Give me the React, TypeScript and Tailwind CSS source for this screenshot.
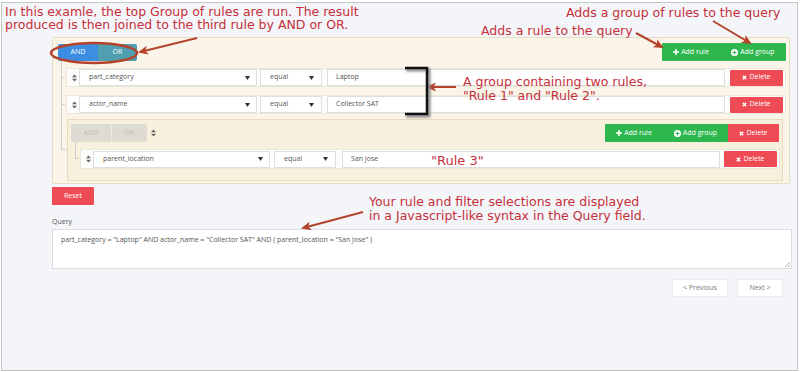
import React from "react";

function SortIcon() {
  return (
    <svg width="5" height="8" viewBox="0 0 5 8">
      <path d="M2.5 0.5L5 3.3H0z M2.5 7.5L0 4.7h5z" fill="#666" />
    </svg>
  );
}

function Caret() {
  return (
    <svg width="5" height="4" viewBox="0 0 5 4">
      <path d="M0 0h5L2.5 4z" fill="#333" />
    </svg>
  );
}

function PlusIcon() {
  return (
    <svg width="6" height="6" viewBox="0 0 6 6" className="mr-[2px]">
      <path d="M2.2 0h1.6v2.2H6v1.6H3.8V6H2.2V3.8H0V2.2h2.2z" fill="#fff" />
    </svg>
  );
}

function PlusCircleIcon() {
  return (
    <svg width="7" height="7" viewBox="0 0 7 7" className="mr-[2px]">
      <circle cx="3.5" cy="3.5" r="3.5" fill="#fff" />
      <path d="M3 1.5h1v1.5h1.5v1H4v1.5H3V4H1.5V3H3z" fill="#2eb74e" />
    </svg>
  );
}

function XIcon() {
  return (
    <svg width="5" height="5" viewBox="0 0 5 5" className="mr-[2px]">
      <path d="M0.8 0.8L4.2 4.2M4.2 0.8L0.8 4.2" stroke="#fff" strokeWidth="1.4" />
    </svg>
  );
}

function DeleteButton({ className = "" }: { className?: string }) {
  return (
    <div
      className={`flex items-center justify-center rounded-[1px] bg-[#ee4b55] text-[7px] text-white ${className}`}
    >
      <XIcon />
      Delete
    </div>
  );
}

interface RuleProps {
  field: string;
  value: string;
  fieldW: string;
  opGap: string;
  valGap: string;
  delGap: string;
  height: string;
}

function Rule({ field, value, fieldW, opGap, valGap, delGap, height }: RuleProps) {
  return (
    <div
      className={`flex items-center border border-[#ebe7dc] bg-[#fdfdfb] pl-[3px] pr-[2px] ${height}`}
    >
      <div className="flex w-[9px] justify-center">
        <SortIcon />
      </div>
      <div
        className={`flex h-[17px] items-center justify-between border border-[#dedede] bg-white pl-[9px] pr-[6px] text-[7px] text-[#555] ${fieldW}`}
      >
        <span>{field}</span>
        <Caret />
      </div>
      <div
        className={`flex h-[17px] w-[62px] items-center justify-between border border-[#dedede] bg-white pl-[9px] pr-[7px] text-[7px] text-[#555] ${opGap}`}
      >
        <span>equal</span>
        <Caret />
      </div>
      <div
        className={`flex h-[17px] flex-1 items-center border border-[#dedede] bg-white pl-[8px] text-[7px] text-[#555] ${valGap}`}
      >
        {value}
      </div>
      <DeleteButton className={`h-[16px] w-[53px] ${delGap}`} />
    </div>
  );
}

function GroupButtons({ withDelete }: { withDelete?: boolean }) {
  return (
    <div className="flex h-[18px] text-[7px] text-white">
      <div className="flex w-[58px] items-center justify-center rounded-l-[1px] bg-[#2eb74e]">
        <PlusIcon />
        Add rule
      </div>
      <div
        className={`flex items-center justify-center bg-[#2eb74e] ${
          withDelete ? "w-[65px]" : "w-[66px] rounded-r-[1px]"
        }`}
      >
        <PlusCircleIcon />
        Add group
      </div>
      {withDelete && (
        <div className="flex w-[51px] items-center justify-center rounded-r-[1px] bg-[#ee4b55]">
          <XIcon />
          Delete
        </div>
      )}
    </div>
  );
}

function Annotations() {
  const red = "#b5432c";
  return (
    <>
      <div className="pointer-events-none absolute left-[5px] top-[5px] text-[12.5px] leading-[13px] text-[#c5303a] font-['DejaVu_Sans',sans-serif]">
        In this examle, the top Group of rules are run. The result
        <br />
        produced is then joined to the third rule by AND or OR.
      </div>
      <div className="pointer-events-none absolute left-[566px] top-[6px] text-[12.5px] leading-[13px] text-[#c5303a] font-['DejaVu_Sans',sans-serif]">
        Adds a group of rules to the query
      </div>
      <div className="pointer-events-none absolute left-[481px] top-[24px] text-[12.5px] leading-[13px] text-[#c5303a] font-['DejaVu_Sans',sans-serif]">
        Adds a rule to the query
      </div>
      <div className="pointer-events-none absolute left-[463px] top-[75px] text-[12.5px] leading-[14px] text-[#c5303a] font-['DejaVu_Sans',sans-serif]">
        A group containing two rules,
        <br />
        "Rule 1" and "Rule 2".
      </div>
      <div className="pointer-events-none absolute left-[431px] top-[154px] text-[13px] leading-[13px] text-[#c5303a] font-['DejaVu_Sans',sans-serif]">
        "Rule 3"
      </div>
      <div className="pointer-events-none absolute left-[369px] top-[195px] text-[12.5px] leading-[13.5px] text-[#c5303a] font-['DejaVu_Sans',sans-serif]">
        Your rule and filter selections are displayed
        <br />
        in a Javascript-like syntax in the Query field.
      </div>

      <svg className="pointer-events-none absolute left-0 top-0" width="800" height="372">
        <defs>
          <marker
            id="head"
            markerWidth="10"
            markerHeight="9"
            refX="8"
            refY="4.5"
            orient="auto"
            markerUnits="userSpaceOnUse"
          >
            <path d="M0 0L10 4.5L0 9L2.5 4.5z" fill={red} />
          </marker>
          <filter id="shadow" x="-20%" y="-20%" width="160%" height="160%">
            <feGaussianBlur stdDeviation="1.2" />
          </filter>
        </defs>
        <ellipse cx="94" cy="53" rx="43" ry="10" fill="none" stroke={red} strokeWidth="2.5" />
        <line x1="197" y1="38" x2="140" y2="52" stroke={red} strokeWidth="2" markerEnd="url(#head)" />
        <line x1="636" y1="33" x2="662" y2="47" stroke={red} strokeWidth="2" markerEnd="url(#head)" />
        <line x1="713" y1="21" x2="750" y2="43" stroke={red} strokeWidth="2" markerEnd="url(#head)" />
        <line x1="456" y1="87" x2="428" y2="87" stroke={red} strokeWidth="2" markerEnd="url(#head)" />
        <line x1="363" y1="212" x2="303" y2="228" stroke={red} strokeWidth="2" markerEnd="url(#head)" />
        <path
          d="M406 70H429V116H406"
          fill="none"
          stroke="#888"
          strokeWidth="3"
          filter="url(#shadow)"
        />
        <path d="M405 68H427V114H405" fill="none" stroke="#111" strokeWidth="2.5" />
      </svg>
    </>
  );
}

export default function App() {
  return (
    <div className="relative h-[372px] w-[800px] overflow-hidden bg-white">
      <div className="ml-[1px] mt-[2px] flex h-[369px] w-[797px] flex-col border border-[#c4c4c4] bg-[#f4f5f9] pl-[50px] font-['Open_Sans',sans-serif]">
        {/* root group */}
        <div className="mt-[34px] w-[738px] rounded-[2px] border border-[#e8dec2] bg-[#faf5e8] pb-[2px] pl-[5px] pr-[3px] pt-[5px]">
          <div className="flex h-[18px] items-center justify-between">
            <div className="flex h-[17px] overflow-hidden rounded-[2px] text-[7px] text-white">
              <div className="flex w-[40px] items-center justify-center bg-[#3d8ee2]">AND</div>
              <div className="flex w-[39px] items-center justify-center bg-[#4f9fb0]">OR</div>
            </div>
            <GroupButtons />
          </div>

          <div className="ml-[8px] mt-[7px] flex flex-col">
            <div className="relative">
              <span className="absolute left-[-5px] top-[-7px] h-[calc(50%+7px)] w-[4px] border-b border-l border-[#cfcfcf]" />
              <span className="absolute left-[-5px] top-1/2 h-[calc(50%+8px)] border-l border-[#cfcfcf]" />
              <Rule
                field="part_category"
                value="Laptop"
                fieldW="w-[178px]"
                opGap="ml-[3px]"
                valGap="ml-[5px]"
                delGap="ml-[5px]"
                height="h-[19px]"
              />
            </div>
            <div className="relative mt-[8px]">
              <span className="absolute left-[-5px] top-[-8px] h-[calc(50%+8px)] w-[4px] border-b border-l border-[#cfcfcf]" />
              <span className="absolute left-[-5px] top-1/2 h-[calc(50%+5px)] border-l border-[#cfcfcf]" />
              <Rule
                field="actor_name"
                value="Collector SAT"
                fieldW="w-[178px]"
                opGap="ml-[3px]"
                valGap="ml-[5px]"
                delGap="ml-[5px]"
                height="h-[19px]"
              />
            </div>

            {/* nested group */}
            <div className="relative ml-[1px] mr-[3px] mt-[5px]">
              <span className="absolute left-[-6px] top-[-5px] h-[calc(50%+5px)] w-[5px] border-b border-l border-[#cfcfcf]" />
              <div className="h-[62px] border border-[#e6dbbd] bg-[#f7f0dc] pl-[3px] pr-[3px] pt-[4px]">
                <div className="flex h-[18px] items-center justify-between">
                  <div className="flex items-center">
                    <div className="flex h-[18px] overflow-hidden rounded-[2px] text-[7px] text-[#c2beb4]">
                      <div className="flex w-[41px] items-center justify-center border-r border-[#ece9e2] bg-[#dedbd3]">
                        AND
                      </div>
                      <div className="flex w-[35px] items-center justify-center bg-[#dedbd3]">OR</div>
                    </div>
                    <div className="ml-[4px] flex">
                      <SortIcon />
                    </div>
                  </div>
                  <GroupButtons withDelete />
                </div>
                <div className="relative ml-[9px] mr-[-1px] mt-[7px]">
                  <span className="absolute left-[-5px] top-[-7px] h-[calc(50%+7px)] w-[4px] border-b border-l border-[#cfcfcf]" />
                  <Rule
                    field="parent_location"
                    value="San Jose"
                    fieldW="w-[177px]"
                    opGap="ml-[4px]"
                    valGap="ml-[6px]"
                    delGap="ml-[4px]"
                    height="h-[20px]"
                  />
                </div>
              </div>
            </div>
          </div>
        </div>

        <div className="mt-[3px] flex h-[18px] w-[42px] items-center justify-center rounded-[1px] bg-[#ee4b55] text-[7px] text-white">
          Reset
        </div>

        <div className="mt-[12px] text-[7px] leading-[9px] text-[#555]">Query</div>
        <div className="relative mt-[3px] h-[40px] w-[740px] border border-[#dedede] bg-white pl-[8px] pt-[5px] text-[7px] text-[#555]">
          part_category = "Laptop" AND actor_name = "Collector SAT" AND ( parent_location = "San Jose" )
          <svg className="absolute bottom-[1px] right-[1px]" width="6" height="6" viewBox="0 0 6 6">
            <path d="M6 1L1 6M6 4L4 6" stroke="#999" strokeWidth="0.8" />
          </svg>
        </div>

        <div className="mt-[10px] flex w-[731px] justify-end gap-[9px] text-[7px] text-[#777]">
          <div className="flex h-[18px] w-[56px] items-center justify-center border border-[#ececec] bg-white">
            &lt; Previous
          </div>
          <div className="flex h-[18px] w-[46px] items-center justify-center border border-[#ececec] bg-white">
            Next &gt;
          </div>
        </div>
      </div>
      <Annotations />
    </div>
  );
}
